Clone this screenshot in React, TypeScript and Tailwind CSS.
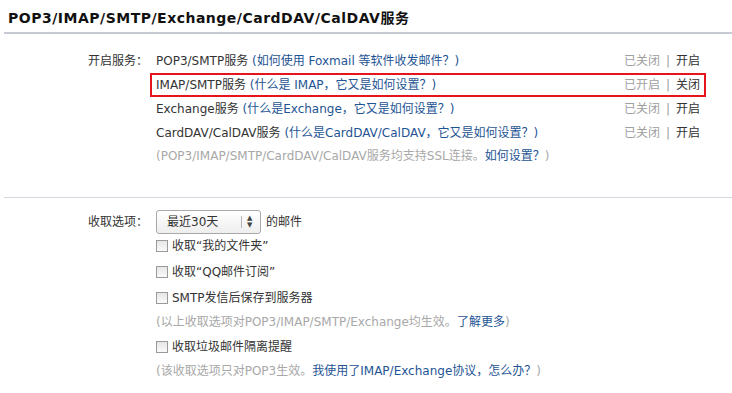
import React from "react";

const services = [
    { name: "POP3/SMTP服务", help: "如何使用 Foxmail 等软件收发邮件？", on: false },
    { name: "IMAP/SMTP服务", help: "什么是 IMAP，它又是如何设置？", on: true },
    { name: "Exchange服务", help: "什么是Exchange，它又是如何设置？", on: false },
    { name: "CardDAV/CalDAV服务", help: "什么是CardDAV/CalDAV，它又是如何设置？", on: false },
];

function Checkbox() {
    return (
        <span className="inline-block w-[12px] h-[12px] border border-[#9a9a9a] bg-gradient-to-b from-[#e6e6e6] to-[#fafafa] mr-[4px] shrink-0" />
    );
}

export default function App() {
    return (
        <div className="w-[732px] h-[393px] bg-white text-[12px] text-[#333] font-['DejaVu_Sans','Noto_Sans_CJK_SC',sans-serif] overflow-hidden">
            {/* 标题 */}
            <div className="ml-[4px] h-[34px] pl-[4px] pt-[9px] border-b-2 border-[#c5cad3]">
                <h1 className="text-[14px] leading-[18px] font-bold tracking-[0.5px] text-[#111]">
                    POP3/IMAP/SMTP/Exchange/CardDAV/CalDAV服务
                </h1>
            </div>

            {/* 开启服务 */}
            <div className="flex pt-[15px] pb-[28px] ml-[4px] border-b border-[#d3d8e0]">
                <div className="w-[146px] text-right pr-[2px] leading-[24px]">开启服务：</div>
                <div className="w-[556px]">
                    {services.map((s) => (
                        <div
                            key={s.name}
                            className={`flex justify-between items-center h-[24px] px-[4px] border-2 ${s.on ? "border-[#e8141b]" : "border-transparent"}`}
                        >
                            <span>
                                {s.name} <span className="text-[#1e5494]">({s.help})</span>
                            </span>
                            <span>
                                <span className="text-[#a0a0a0]">{s.on ? "已开启" : "已关闭"}</span>
                                <span className="text-[#a0a0a0] mx-[6px]">|</span>
                                <span>{s.on ? "关闭" : "开启"}</span>
                            </span>
                        </div>
                    ))}
                    <div className="h-[24px] leading-[22px] px-[6px] text-[#a8a8a8]">
                        (POP3/IMAP/SMTP/CardDAV/CalDAV服务均支持SSL连接。<span className="text-[#1e5494]">如何设置？</span>)
                    </div>
                </div>
            </div>

            {/* 收取选项 */}
            <div className="flex pt-[12px] ml-[4px]">
                <div className="w-[146px] text-right pr-[2px] leading-[24px]">收取选项：</div>
                <div className="pl-[6px]">
                    <div className="flex items-center h-[24px]">
                        <div className="flex items-center w-[105px] h-[24px] border border-[#a9a9a9] rounded-[3px] bg-gradient-to-b from-white to-[#eeeeee]">
                            <span className="pl-[10px] w-[84px]">最近30天</span>
                            <span className="w-px h-[12px] bg-[#b5b5b5]" />
                            <span className="ml-[5px] flex flex-col items-center leading-none text-[7px] text-[#444]">
                                <span>▲</span>
                                <span>▼</span>
                            </span>
                        </div>
                        <span className="ml-[5px]">的邮件</span>
                    </div>
                    <div className="flex items-center h-[24px]">
                        <Checkbox />
                        收取“我的文件夹”
                    </div>
                    <div className="flex items-center h-[28px]">
                        <Checkbox />
                        收取“QQ邮件订阅”
                    </div>
                    <div className="flex items-center h-[24px]">
                        <Checkbox />
                        SMTP发信后保存到服务器
                    </div>
                    <div className="h-[24px] leading-[24px] text-[#a8a8a8]">
                        (以上收取选项对POP3/IMAP/SMTP/Exchange均生效。<span className="text-[#1e5494]">了解更多</span>)
                    </div>
                    <div className="flex items-center h-[26px]">
                        <Checkbox />
                        收取垃圾邮件隔离提醒
                    </div>
                    <div className="h-[22px] leading-[22px] text-[#a8a8a8]">
                        (该收取选项只对POP3生效。<span className="text-[#1e5494]">我使用了IMAP/Exchange协议，怎么办？</span>)
                    </div>
                </div>
            </div>
        </div>
    );
}
